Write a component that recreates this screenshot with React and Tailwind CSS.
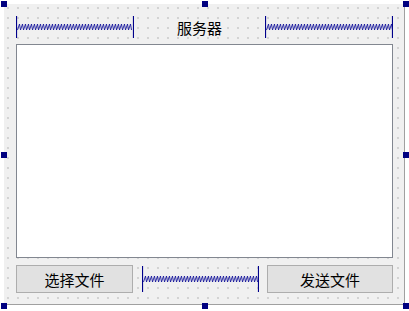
const FONT = { fontFamily: '"Noto Sans CJK SC", "Noto Sans", sans-serif' };

function Spring({ width, height = 22 }) {
  // Qt Designer spacer: two end bars with a blue coil between
  const mid = height / 2;
  let d = '';
  for (let x = 1.5; x < width - 3; x += 3) {
    d += `M${x} ${mid + 3} L${x + 2} ${mid - 3} L${x + 3} ${mid + 3} `;
  }
  return (
    <svg width={width} height={height} className="block shrink-0">
      <path d={d} fill="none" stroke="#16169c" strokeWidth="0.9" />
      <line x1="0.5" y1="0" x2="0.5" y2={height} stroke="#00008b" strokeWidth="1.2" />
      <line x1={width - 0.5} y1="0" x2={width - 0.5} y2={height} stroke="#00008b" strokeWidth="1.2" />
    </svg>
  );
}

function Handle({ className }) {
  return <div className={`absolute w-[6px] h-[6px] bg-[#000080] ${className}`} />;
}

function PushButton({ children, width }) {
  return (
    <button
      className="h-[28px] border border-[#adadad] bg-[#e1e1e1] text-[15px] leading-none text-black shrink-0"
      style={{ ...FONT, width }}
    >
      {children}
    </button>
  );
}

export default function App() {
  return (
    <div className="relative w-[409px] h-[311px] bg-white overflow-hidden">
      <div className="absolute left-[4px] top-[4px] w-[401px] h-[301px] border-r border-b border-[#a0a0a0] bg-[#f0f0f0] bg-[radial-gradient(circle,#b0b0b0_0.6px,transparent_0.8px)] bg-[size:10px_10px] bg-[position:-1px_-1px]">
        <div className="flex flex-col h-full pl-[12px] pr-[11px] pt-[12px] pb-[11px]">
          {/* top row */}
          <div className="flex items-center h-[22px]">
            <Spring width={118} />
            <div className="flex-1 text-center text-[15px] text-black leading-none" style={FONT}>
              服务器
            </div>
            <Spring width={128} />
          </div>

          {/* text area */}
          <div className="mt-[6px] h-[214px] border border-[#828790] bg-white" />

          {/* bottom row */}
          <div className="flex items-center mt-[7px]">
            <PushButton width={117}>选择文件</PushButton>
            <div className="ml-[9px]">
              <Spring width={117} height={26} />
            </div>
            <div className="flex-1" />
            <PushButton width={126}>发送文件</PushButton>
          </div>
        </div>
      </div>

      <Handle className="left-[1px] top-[1px]" />
      <Handle className="left-[202px] top-[1px]" />
      <Handle className="left-[403px] top-[1px]" />
      <Handle className="left-[1px] top-[152px]" />
      <Handle className="left-[403px] top-[152px]" />
      <Handle className="left-[1px] top-[303px]" />
      <Handle className="left-[202px] top-[303px]" />
      <Handle className="left-[403px] top-[303px]" />
    </div>
  );
}
